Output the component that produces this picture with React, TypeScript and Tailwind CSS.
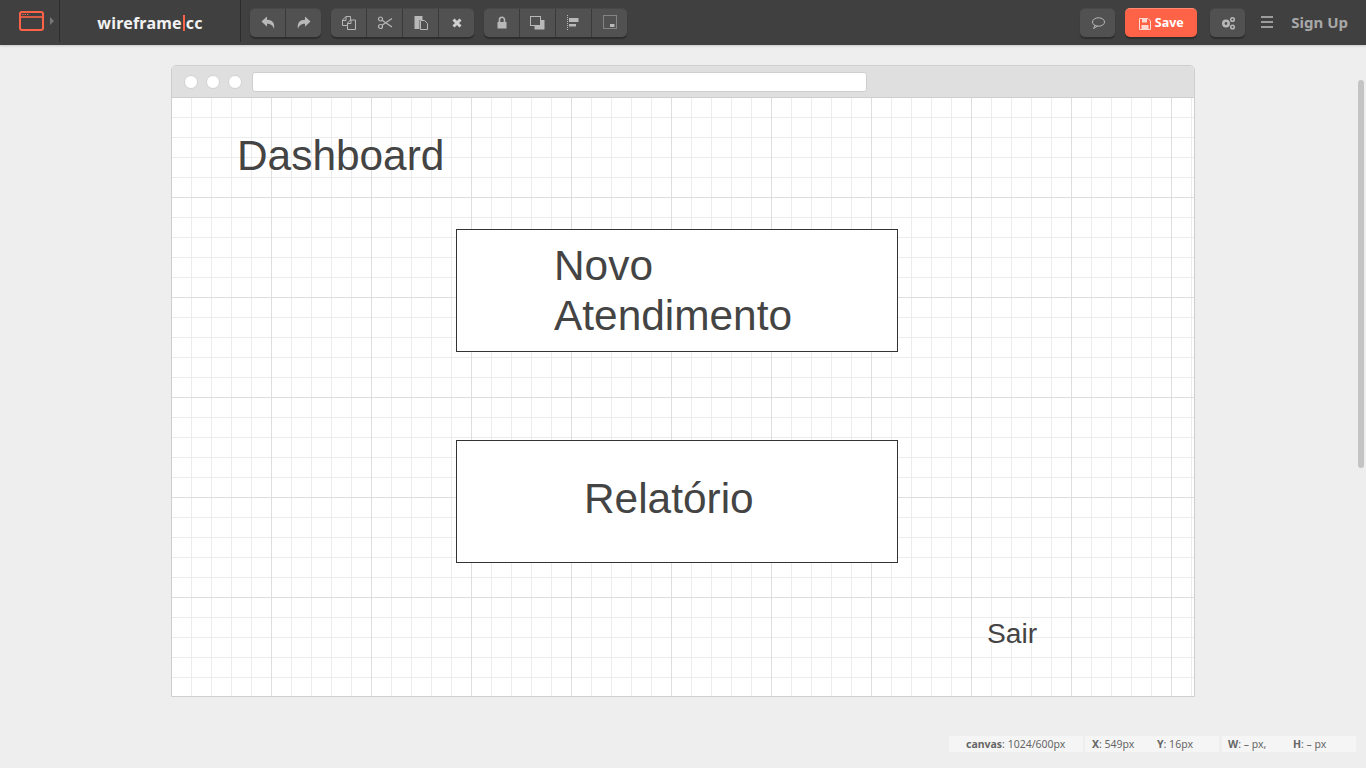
import type { ReactNode } from "react";

const sw = { fill: "none", stroke: "currentColor", strokeWidth: 1 };

function Btn({ children, last }: { children: ReactNode; last?: boolean }) {
  return (
    <div className={`flex h-full items-center justify-center pl-[1px] text-[#b8b8b8] ${last ? "w-[35px]" : "w-9 border-r border-[#3a3a3a]"}`}>
      {children}
    </div>
  );
}

function Group({ children }: { children: ReactNode }) {
  return (
    <div className="flex h-[29px] rounded-[5px] border-t border-[#484848] bg-[#515151] shadow-[0_2px_1px_#2e2e2e]">
      {children}
    </div>
  );
}

function Icon({ children }: { children: ReactNode }) {
  return (
    <svg width="16" height="16" viewBox="0 0 16 16">
      {children}
    </svg>
  );
}

function Toolbar() {
  return (
    <header className="flex h-[45px] shrink-0 items-start bg-[#404040] shadow-[0_1px_2px_#c8c8c8] font-['Noto_Sans',sans-serif]">
      <div className="flex h-[42px] w-[60px] items-center border-r border-[#2c2c2c] pl-[19px]">
        <svg width="25" height="20" viewBox="0 0 25 20" className="mb-[1px] text-[#ff6347]">
          <rect x="1" y="1" width="23" height="18" rx="2" fill="none" stroke="currentColor" strokeWidth="2" />
          <path d="M1 6h23" stroke="currentColor" strokeWidth="1.6" />
          <path d="M3 3.5h1.5M5.5 3.5H7M8 3.5h1.5" stroke="currentColor" strokeWidth="1" />
        </svg>
        <span className="ml-[6px] h-0 w-0 border-y-4 border-l-4 border-y-transparent border-l-[#777]" />
      </div>
      <div className="flex h-[42px] w-[181px] items-center justify-center border-r border-[#2c2c2c] pt-[3px] text-[16px] font-bold tracking-[0.2px] text-[#f2f2f2]">
        <span>wireframe</span>
        <span className="mx-[1px] mt-[1px] h-[16px] w-[2px] bg-[#ff6347]" />
        <span>cc</span>
      </div>

      <div className="ml-[9px] mt-[8px] flex gap-[10px]">
        <Group>
          <Btn>
            <Icon>
              <path d="M1.5 6.5 7 1.5V4.8c5 0 8.2 3 7 9.2-1-3.8-3.4-5.2-7-5.2v3z" fill="currentColor" />
            </Icon>
          </Btn>
          <Btn last>
            <Icon>
              <path d="M14.5 6.5 9 1.5V4.8c-5 0-8.2 3-7 9.2 1-3.8 3.4-5.2 7-5.2v3z" fill="currentColor" />
            </Icon>
          </Btn>
        </Group>
        <Group>
          <Btn>
            <Icon>
              <path d="M6.5 10.5h-5V5L5 1.5h4.5V5" {...sw} />
              <path d="M1.5 5.5H5V1.5" {...sw} />
              <path d="M6.5 8 9.5 5h5v9.5h-8z" {...sw} />
              <path d="M6.5 8.5H10V5" {...sw} />
            </Icon>
          </Btn>
          <Btn>
            <Icon>
              <circle cx="3.5" cy="4" r="2" fill="none" stroke="currentColor" strokeWidth="1.2" />
              <circle cx="3.5" cy="11.5" r="2" fill="none" stroke="currentColor" strokeWidth="1.2" />
              <path d="M5 5.2 15 12M5 10.3 15 3.5" fill="none" stroke="currentColor" strokeWidth="1.2" />
            </Icon>
          </Btn>
          <Btn>
            <Icon>
              <path d="M1.5 1h8v4H6.5v9h-5z" fill="currentColor" />
              <path d="M7.5 5.5h4l3 3v6h-7z" {...sw} />
            </Icon>
          </Btn>
          <Btn last>
            <Icon>
              <path d="M4.5 4.5l7 7M11.5 4.5l-7 7" stroke="#d0d0d0" strokeWidth="3" />
            </Icon>
          </Btn>
        </Group>
        <Group>
          <Btn>
            <Icon>
              <path d="M3.5 7h9v6.5h-9z" fill="currentColor" />
              <path d="M5.5 7V4.8a2.5 2.5 0 0 1 5 0V7" fill="none" stroke="currentColor" strokeWidth="1.6" />
            </Icon>
          </Btn>
          <Btn>
            <Icon>
              <path d="M11 5h3.500v9.500h-10V11H11z" fill="currentColor" />
              <rect x="0.5" y="1.500" width="10" height="9" {...sw} />
            </Icon>
          </Btn>
          <Btn>
            <Icon>
              <path d="M1.500 0v15" stroke="currentColor" strokeDasharray="1 1" />
              <path d="M3 3h9.500v4H3zM3 9h7v2.500H3z" fill="currentColor" />
            </Icon>
          </Btn>
          <Btn last>
            <Icon>
              <rect x="1.500" y="0.500" width="13" height="13" fill="none" stroke="currentColor" strokeDasharray="1 1" />
              <path d="M8 9h4.500v3H8z" fill="currentColor" />
            </Icon>
          </Btn>
        </Group>
      </div>

      <div className="ml-auto mt-[8px] flex items-start">
        <Group>
          <Btn last>
            <Icon>
              <ellipse cx="8.500" cy="7" rx="6" ry="4.200" {...sw} />
              <path d="M5 10.500 3.500 13.500 7.500 11" {...sw} />
            </Icon>
          </Btn>
        </Group>
        <div className="ml-[10px] flex h-[29px] w-[72px] items-center justify-center gap-[4px] rounded-[5px] border-t border-[#ff8a70] bg-[#ff6347] pt-[1px] text-[12.5px] font-bold text-[#fff] shadow-[0_2px_1px_#2e2e2e]">
          <svg width="12" height="12" viewBox="0 0 12 12" className="text-[#ffd8cf]">
            <path d="M0.500 0.500h8.500l2.500 2.500v8.500H0.500z" fill="none" stroke="currentColor" />
            <path d="M3 1h5v3.500H3zM2.500 7h7v4h-7z" fill="currentColor" />
          </svg>
          Save
        </div>
        <div className="ml-[13px]">
          <Group>
            <Btn last>
              <Icon>
                <circle cx="6" cy="8.500" r="2.700" fill="none" stroke="currentColor" strokeWidth="2.600" />
                <circle cx="12.500" cy="4.500" r="1.800" fill="none" stroke="currentColor" strokeWidth="1.500" />
                <circle cx="12.500" cy="12" r="1.800" fill="none" stroke="currentColor" strokeWidth="1.500" />
              </Icon>
            </Btn>
          </Group>
        </div>
        <div className="ml-[16px] mt-[8px] flex h-[12px] w-[12px] flex-col justify-between">
          <span className="h-[2px] bg-[#9c9c9c]" />
          <span className="h-[2px] bg-[#9c9c9c]" />
          <span className="h-[2px] bg-[#9c9c9c]" />
        </div>
        <div className="ml-[18px] mr-[18px] mt-[2px] text-[15px] font-bold leading-[24px] text-[#a8a8a8]">Sign Up</div>
      </div>
    </header>
  );
}

function Box({ className, children }: { className: string; children: ReactNode }) {
  return <div className={`absolute h-[123px] w-[442px] border border-[#333] bg-white ${className}`}>{children}</div>;
}

function Canvas() {
  return (
    <div className="ml-[171px] mt-[20px] h-[632px] w-[1024px] overflow-hidden rounded-t-[5px] border border-[#cfcfcf] bg-white">
      <div className="flex h-[32px] items-center gap-[8px] border-b border-[#cfcfcf] bg-[#dfdfdf] pl-[12px]">
        <span className="size-[14px] rounded-full border border-[#d2d2d2] bg-white" />
        <span className="size-[14px] rounded-full border border-[#d2d2d2] bg-white" />
        <span className="size-[14px] rounded-full border border-[#d2d2d2] bg-white" />
        <span className="ml-[2px] h-[20px] w-[615px] rounded-[3px] border border-[#cfcfcf] bg-white" />
      </div>
      <div className="relative h-[600px] bg-[image:repeating-linear-gradient(to_right,transparent_0,transparent_99px,#dedede_99px,#dedede_100px),repeating-linear-gradient(to_bottom,transparent_0,transparent_99px,#dedede_99px,#dedede_100px),repeating-linear-gradient(to_right,transparent_0,transparent_19px,#ececec_19px,#ececec_20px),repeating-linear-gradient(to_bottom,transparent_0,transparent_19px,#ececec_19px,#ececec_20px)] font-['Liberation_Sans',sans-serif] text-[#444]">
        <div className="absolute left-[65px] top-[33px] text-[42.4px] leading-[50px]">Dashboard</div>
        <Box className="left-[284px] top-[131px]">
          <div className="ml-[97px] mt-[11px] w-[260px] text-[42.4px] leading-[50px]">Novo Atendimento</div>
        </Box>
        <Box className="left-[284px] top-[342px]">
          <div className="ml-[127px] mt-[33px] text-[42.4px] leading-[50px]">Relatório</div>
        </Box>
        <div className="absolute left-[815px] top-[517px] text-[28.2px] leading-[36px]">Sair</div>
      </div>
    </div>
  );
}

function StatusBar() {
  return (
    <footer className="mr-[10px] mt-[39px] flex justify-end gap-[2px] font-['Noto_Sans',sans-serif] text-[10.5px] leading-[16px] text-[#666]">
      <div className="w-[134px] bg-[#f5f5f5] pl-[17px]">
        <b>canvas</b>: 1024/600px
      </div>
      <div className="flex w-[134px] bg-[#f5f5f5] pl-[7px]">
        <span className="w-[65px]">
          <b>X</b>: 549px
        </span>
        <span>
          <b>Y</b>: 16px
        </span>
      </div>
      <div className="ml-[1px] flex w-[134px] bg-[#f5f5f5] pl-[6px]">
        <span className="w-[65px]">
          <b>W</b>: – px,
        </span>
        <span>
          <b>H</b>: – px
        </span>
      </div>
    </footer>
  );
}

export default function App() {
  return (
    <div className="relative flex h-screen flex-col overflow-hidden bg-[#eeeeee]">
      <Toolbar />
      <Canvas />
      <StatusBar />
      {/* page scrollbar thumb */}
      <div className="absolute right-[2px] top-[80px] h-[388px] w-[6px] rounded-[3px] bg-[#c4c4c4]" />
    </div>
  );
}
